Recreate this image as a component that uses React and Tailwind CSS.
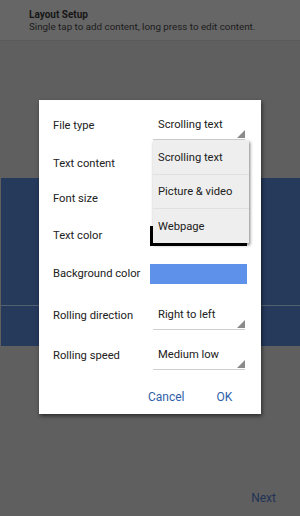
import React from "react";

const font = { fontFamily: "Roboto, 'Noto Sans', sans-serif" };

function Spinner({ value }) {
    return (
        <div className="relative ml-[3px] flex h-[28px] w-[92px] items-center border-b border-[#cfcfcf] pl-[5px] text-[11.2px] text-[#212121]">
            {value}
            <svg className="absolute bottom-[1px] right-0" width="8" height="8" viewBox="0 0 8 8">
                <polygon points="8,0 8,8 0,8" fill="#8a8a8a" />
            </svg>
        </div>
    );
}

function Row({ label, h, children }) {
    return (
        <div className={`flex items-center ${h}`}>
            <div className="w-[97px] shrink-0 text-[11.2px] text-[#212121]">{label}</div>
            {children}
        </div>
    );
}

export default function App() {
    return (
        <div className="relative h-[516px] w-[300px] overflow-hidden bg-[#5f5f5f]" style={font}>
            {/* Page behind the dialog */}
            <div className="flex h-[41px] flex-col justify-center border-b border-[#5a5a5a] bg-[#666666] pl-[29px]">
                <div className="text-[10px] font-bold leading-[13px] text-[#161616]">Layout Setup</div>
                <div className="text-[9.8px] leading-[12px] text-[#1c1c1c]">Single tap to add content, long press to edit content.</div>
            </div>
            <div className="mt-[137px] ml-[1px] flex h-[168px] w-[299px] flex-col bg-[#263a5c]">
                <div className="h-[127px]" />
                <div className="h-px bg-[#55606f]" />
                <div className="flex-1" />
            </div>
            <div className="mt-[143px] flex justify-end pr-[24px] text-[12px] text-[#1f3356]">Next</div>

            {/* Dialog */}
            <div className="absolute left-[39px] top-[100px] h-[314px] w-[222px] bg-white pl-[14px] pt-[9px] shadow-[1px_2px_4px_rgba(0,0,0,0.55)]">
                <Row label="File type" h="h-[34px]">
                    <Spinner value="Scrolling text" />
                </Row>
                <Row label="Text content" h="h-[42px]" />
                <Row label="Font size" h="h-[28px]" />
                <Row label="Text color" h="h-[46px]">
                    <div className="h-[20px] w-[97px] bg-black" />
                </Row>
                <Row label="Background color" h="h-[30px]">
                    <div className="h-[20px] w-[97px] bg-[#5d91ea]" />
                </Row>
                <Row label="Rolling direction" h="h-[54px]">
                    <Spinner value="Right to left" />
                </Row>
                <Row label="Rolling speed" h="h-[26px]">
                    <Spinner value="Medium low" />
                </Row>
                <div className="mt-[13px] flex h-[30px] items-center text-[12px] text-[#2f5fa7]">
                    <span className="ml-[95px]">Cancel</span>
                    <span className="ml-[32px]">OK</span>
                </div>

                {/* Open dropdown */}
                <div className="absolute left-[114px] top-[40px] w-[96px] bg-[#eeeeee] text-[11.2px] text-[#212121] shadow-[1px_2px_3px_rgba(0,0,0,0.5)]">
                    <div className="flex h-[35px] items-center border-b border-[#e0e0e0] pl-[5px] pt-[2px]">Scrolling text</div>
                    <div className="flex h-[34px] items-center border-b border-[#e0e0e0] pl-[5px] pt-[2px]">Picture &amp; video</div>
                    <div className="flex h-[34px] items-center pl-[5px] pt-[2px]">Webpage</div>
                </div>
            </div>
        </div>
    );
}
